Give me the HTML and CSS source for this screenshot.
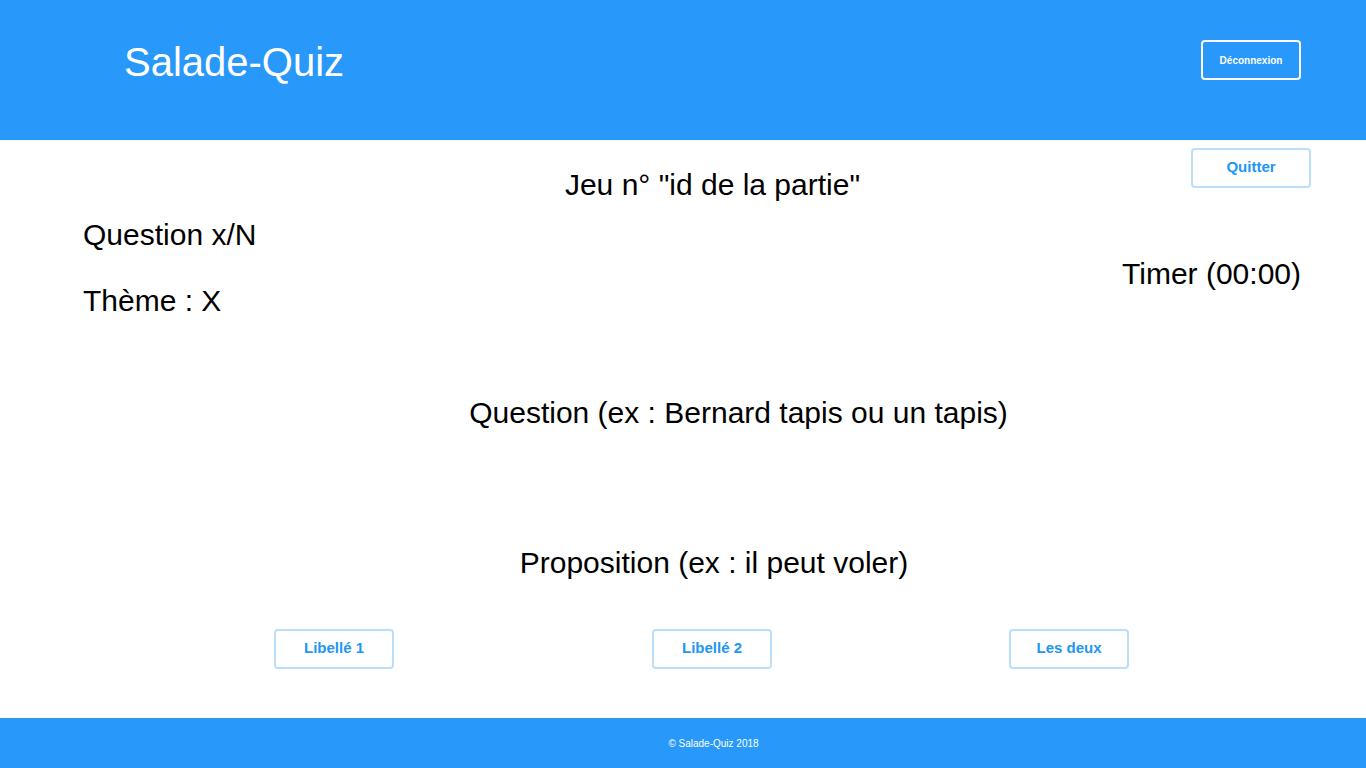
FILE: index.html
```html
<!DOCTYPE html>
<html lang="fr">
<head>
<meta charset="utf-8">
<title>Salade-Quiz</title>
<link rel="stylesheet" href="styles.css">
</head>
<body>
<header class="header">
  <h1 class="brand">Salade-Quiz</h1>
  <button class="btn-logout">Déconnexion</button>
</header>
<main class="main">
  <div class="top-row">
    <h2 class="game-title">Jeu n° "id de la partie"</h2>
    <button class="btn btn-quit">Quitter</button>
  </div>
  <div class="info-row">
    <div class="info-left">
      <p class="txt">Question x/N</p>
      <p class="txt theme">Thème : X</p>
    </div>
    <div class="info-right">
      <p class="txt">Timer (00:00)</p>
    </div>
  </div>
  <p class="txt question">Question (ex : Bernard tapis ou un tapis)</p>
  <p class="txt proposition">Proposition (ex : il peut voler)</p>
  <div class="answers">
    <button class="btn ans-1">Libellé 1</button>
    <button class="btn ans-2">Libellé 2</button>
    <button class="btn ans-3">Les deux</button>
  </div>
</main>
<footer class="footer">© Salade-Quiz 2018</footer>
</body>
</html>
```

FILE: styles.css
```css
* { box-sizing: border-box; }
html, body { margin: 0; padding: 0; }
body {
  font-family: "Liberation Sans", Arial, sans-serif;
  color: #000;
  background: #fff;
  min-height: 100vh;
  display: flex;
  flex-direction: column;
}
.header {
  height: 140px;
  background: #2899fa;
  display: flex;
  align-items: center;
  justify-content: space-between;
  padding: 0 65px 20px 124px;
}
.brand {
  margin: 0;
  padding-top: 3px;
  font-size: 40px;
  font-weight: normal;
  color: #fff;
  line-height: 46px;
}
.btn-logout {
  width: 100px;
  height: 40px;
  border: 2px solid #fff;
  border-radius: 4px;
  background: transparent;
  color: #fff;
  font-family: "Liberation Sans", Arial, sans-serif;
  font-weight: bold;
  font-size: 10px;
  padding: 0;
}
.main {
  flex: 1;
  padding: 8px 55px 0 83px;
}
.top-row {
  display: flex;
  align-items: flex-start;
}
.game-title {
  flex: 1;
  margin: 20px 0 0 0;
  padding-left: 151px;
  text-align: center;
  font-size: 30px;
  font-weight: normal;
  line-height: 34px;
}
.btn {
  width: 120px;
  height: 40px;
  border: 2px solid #bbdefb;
  border-radius: 4px;
  background: #fff;
  color: #2196f3;
  font-family: "Liberation Sans", Arial, sans-serif;
  font-weight: bold;
  font-size: 15px;
  padding: 0 0 4px 0;
}
.txt {
  margin: 0;
  font-size: 30px;
  line-height: 34px;
}
.info-row {
  display: flex;
  justify-content: space-between;
  align-items: flex-start;
}
.info-left { margin-top: 16px; }
.theme { margin-top: 32px; }
.info-right {
  margin-top: 55px;
  padding-right: 10px;
}
.question {
  margin-top: 78px;
  padding-left: 83px;
  text-align: center;
}
.proposition {
  margin-top: 116px;
  padding-left: 34px;
  text-align: center;
}
.answers {
  display: flex;
  margin-top: 49px;
}
.ans-1 { margin-left: 191px; }
.ans-2 { margin-left: 258px; }
.ans-3 { margin-left: 237px; }
.footer {
  height: 50px;
  background: #2899fa;
  color: #fff;
  font-size: 10px;
  display: flex;
  align-items: center;
  justify-content: center;
  padding-left: 61px;
}
```
